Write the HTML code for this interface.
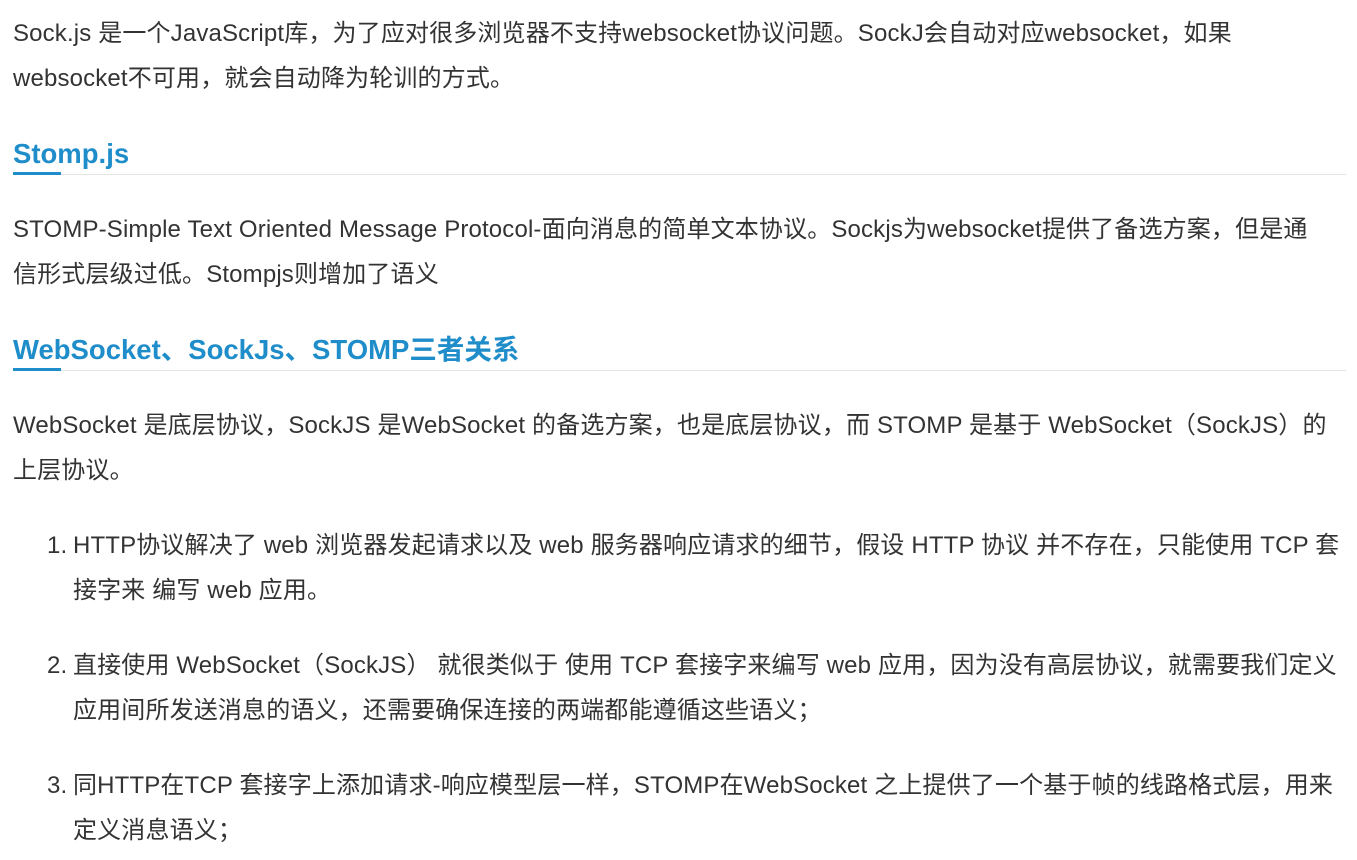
<!DOCTYPE html>
<html><head><meta charset="utf-8"><style>
body{margin:0;background:#fff;width:1357px;height:860px;overflow:hidden;font-family:"Liberation Sans","Noto Sans CJK SC",sans-serif;color:#333;font-size:24px;letter-spacing:0.15px}
.l{position:absolute;white-space:nowrap;line-height:30px}
.h{position:absolute;left:13px;font-weight:bold;color:#1f8dca;font-size:27.5px;white-space:nowrap;line-height:34px;letter-spacing:0}
.rule{position:absolute;left:13px;width:1333px;height:1px;background:#e4e4e4}
.bar{position:absolute;left:13px;width:48px;height:3px;background:#1f8dca}
</style></head><body>
<div class="l" style="left:13px;top:19px">Sock.js 是一个JavaScript库，为了应对很多浏览器不支持websocket协议问题。SockJ会自动对应websocket，如果</div>
<div class="l" style="left:13px;top:64px">websocket不可用，就会自动降为轮训的方式。</div>
<div class="h" style="top:137px">Stomp.js</div>
<div class="rule" style="top:174px"></div><div class="bar" style="top:172px"></div>
<div class="l" style="left:13px;top:215px">STOMP-Simple Text Oriented Message Protocol-面向消息的简单文本协议。Sockjs为websocket提供了备选方案，但是通</div>
<div class="l" style="left:13px;top:260px">信形式层级过低。Stompjs则增加了语义</div>
<div class="h" style="top:333px">WebSocket、SockJs、STOMP三者关系</div>
<div class="rule" style="top:370px"></div><div class="bar" style="top:368px"></div>
<div class="l" style="left:13px;top:411px">WebSocket 是底层协议，SockJS 是WebSocket 的备选方案，也是底层协议，而 STOMP 是基于 WebSocket（SockJS）的</div>
<div class="l" style="left:13px;top:456px">上层协议。</div>
<div class="l" style="left:47px;top:531px">1.</div><div class="l" style="left:73px;top:531px">HTTP协议解决了 web 浏览器发起请求以及 web 服务器响应请求的细节，假设 HTTP 协议 并不存在，只能使用 TCP 套</div>
<div class="l" style="left:73px;top:576px">接字来 编写 web 应用。</div>
<div class="l" style="left:47px;top:651px">2.</div><div class="l" style="left:73px;top:651px">直接使用 WebSocket（SockJS） 就很类似于 使用 TCP 套接字来编写 web 应用，因为没有高层协议，就需要我们定义</div>
<div class="l" style="left:73px;top:696px">应用间所发送消息的语义，还需要确保连接的两端都能遵循这些语义；</div>
<div class="l" style="left:47px;top:771px">3.</div><div class="l" style="left:73px;top:771px">同HTTP在TCP 套接字上添加请求-响应模型层一样，STOMP在WebSocket 之上提供了一个基于帧的线路格式层，用来</div>
<div class="l" style="left:73px;top:816px">定义消息语义；</div>
</body></html>
